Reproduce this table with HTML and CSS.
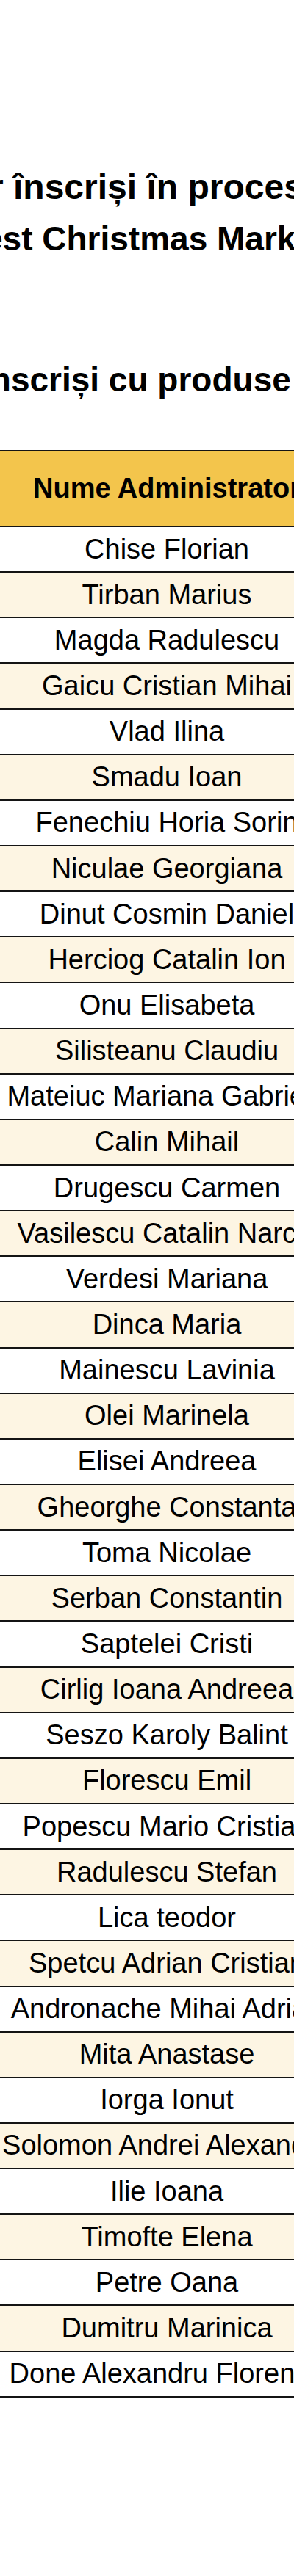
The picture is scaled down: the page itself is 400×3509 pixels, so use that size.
FILE: index.html
```html
<!DOCTYPE html>
<html lang="ro">
<head>
<meta charset="utf-8">
<title>Comercianți înscriși</title>
<link rel="stylesheet" href="styles.css">
</head>
<body>
<main class="page">
  <header class="titles">
    <h1 class="title">
      <span class="line line-1">r înscriși în procesul de selecție</span>
      <span class="line line-2">est Christmas Market</span>
    </h1>
    <h2 class="subtitle">înscriși cu produse</h2>
  </header>
  <section class="sheet">
    <div class="grid">
      <div class="cell head">Nume Administrator</div>
      <div class="cell">Chise Florian</div>
      <div class="cell alt">Tirban Marius</div>
      <div class="cell">Magda Radulescu</div>
      <div class="cell alt">Gaicu Cristian Mihai</div>
      <div class="cell">Vlad Ilina</div>
      <div class="cell alt">Smadu Ioan</div>
      <div class="cell">Fenechiu Horia Sorin</div>
      <div class="cell alt">Niculae Georgiana</div>
      <div class="cell">Dinut Cosmin Daniel</div>
      <div class="cell alt">Herciog Catalin Ion</div>
      <div class="cell">Onu Elisabeta</div>
      <div class="cell alt">Silisteanu Claudiu</div>
      <div class="cell">Mateiuc Mariana Gabriela</div>
      <div class="cell alt">Calin Mihail</div>
      <div class="cell">Drugescu Carmen</div>
      <div class="cell alt">Vasilescu Catalin Narcis</div>
      <div class="cell">Verdesi Mariana</div>
      <div class="cell alt">Dinca Maria</div>
      <div class="cell">Mainescu Lavinia</div>
      <div class="cell alt">Olei Marinela</div>
      <div class="cell">Elisei Andreea</div>
      <div class="cell alt">Gheorghe Constanta</div>
      <div class="cell">Toma Nicolae</div>
      <div class="cell alt">Serban Constantin</div>
      <div class="cell">Saptelei Cristi</div>
      <div class="cell alt">Cirlig Ioana Andreea</div>
      <div class="cell">Seszo Karoly Balint</div>
      <div class="cell alt">Florescu Emil</div>
      <div class="cell">Popescu Mario Cristian</div>
      <div class="cell alt">Radulescu Stefan</div>
      <div class="cell">Lica teodor</div>
      <div class="cell alt">Spetcu Adrian Cristian</div>
      <div class="cell">Andronache Mihai Adrian</div>
      <div class="cell alt">Mita Anastase</div>
      <div class="cell">Iorga Ionut</div>
      <div class="cell alt">Solomon Andrei Alexandru</div>
      <div class="cell">Ilie Ioana</div>
      <div class="cell alt">Timofte Elena</div>
      <div class="cell">Petre Oana</div>
      <div class="cell alt">Dumitru Marinica</div>
      <div class="cell">Done Alexandru Florentin</div>
    </div>
  </section>
</main>
</body>
</html>
```
FILE: styles.css
```css
html, body {
  margin: 0;
  padding: 0;
  background: #ffffff;
}

.page {
  width: 400px;
  height: 3509px;
  overflow: hidden;
  font-family: "Liberation Sans", Arial, sans-serif;
  color: #000;
}

.titles {
  padding-top: 220px;
}

.title {
  margin: 0;
  font-weight: bold;
  line-height: 70px;
}

.line {
  display: block;
  white-space: nowrap;
}

.line-1 {
  font-size: 48px;
  text-indent: -14px;
}

.line-2 {
  font-size: 46px;
  text-indent: -22px;
}

.subtitle {
  margin: 122px 0 0;
  font-size: 46px;
  font-weight: bold;
  line-height: 70px;
  white-space: nowrap;
  text-indent: -26px;
}

.sheet {
  margin-top: 61px;
  margin-left: -73px;
  width: 600px;
}

.grid {
  display: flex;
  flex-direction: column;
  border-top: 2px solid #141414;
}

.cell {
  box-sizing: border-box;
  height: 62.15px;
  border-bottom: 2px solid #141414;
  display: flex;
  align-items: center;
  justify-content: center;
  font-size: 38px;
  white-space: nowrap;
  background: #ffffff;
}

.cell.alt {
  background: #fdf5e3;
}

.cell.head {
  height: 103px;
  font-weight: bold;
  background: #f3c54c;
}
```
